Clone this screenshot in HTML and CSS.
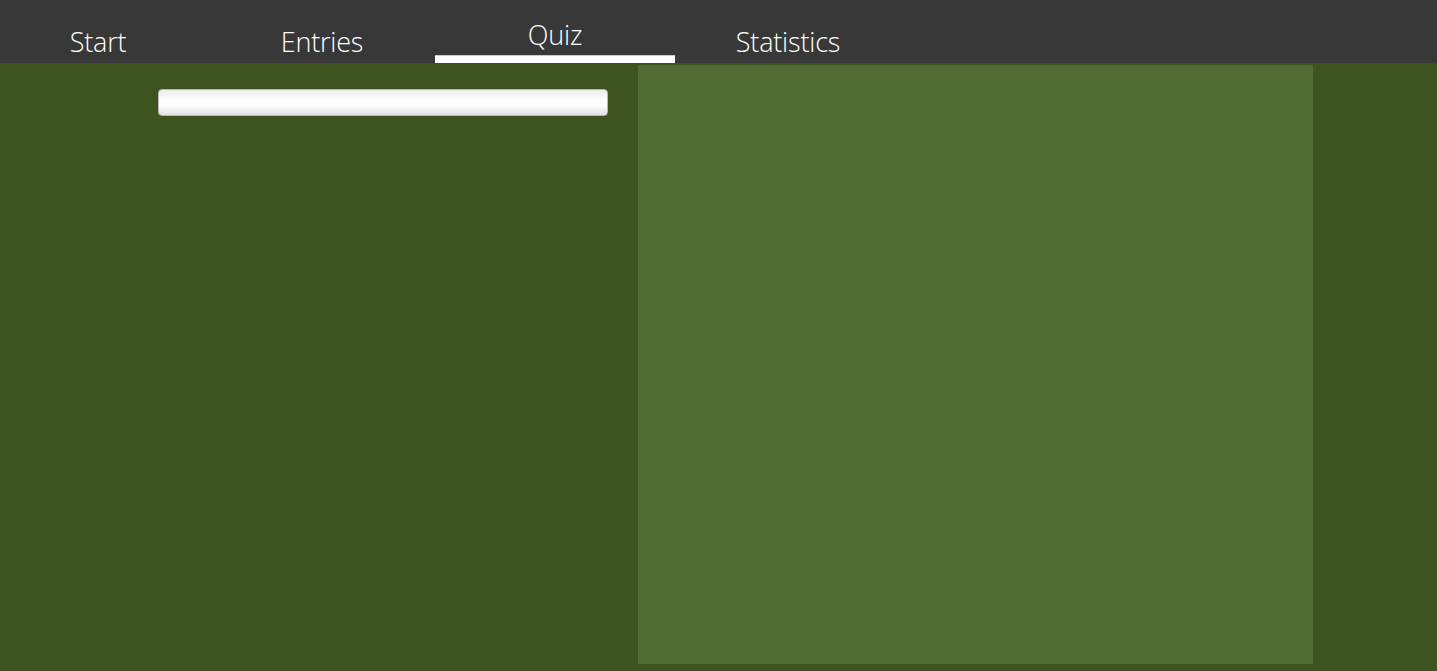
FILE: index.html
```
<!DOCTYPE html>
<html>
<head>
<meta charset="utf-8">
<link rel="stylesheet" href="styles.css">
</head>
<body>
<div class="app">
  <nav class="tabs">
    <div class="tab tab-start"><span>Start</span></div>
    <div class="tab tab-entries"><span>Entries</span></div>
    <div class="tab tab-quiz active"><span>Quiz</span></div>
    <div class="tab tab-stats"><span>Statistics</span></div>
  </nav>
  <main class="content">
    <section class="left">
      <div class="progress"></div>
    </section>
    <section class="card"></section>
  </main>
</div>
</body>
</html>
```
FILE: styles.css
```
html, body {
  margin: 0;
  padding: 0;
  height: 100%;
}
body {
  background: #3d5421;
  font-family: "Open Sans", "Segoe UI", sans-serif;
  overflow: hidden;
}
.app {
  display: flex;
  flex-direction: column;
  height: 671px;
}
.tabs {
  display: flex;
  height: 63px;
  background: #383838;
  flex: none;
}
.tab {
  position: relative;
  color: #ffffff;
  font-weight: 300;
  font-size: 27px;
  letter-spacing: -0.2px;
  text-align: center;
  box-sizing: border-box;
  padding-top: 25px;
  line-height: 34px;
}
.tab-start { width: 196px; }
.tab-entries { width: 239px; padding-left: 13px; }
.tab-quiz { width: 240px; }
.tab-stats { width: 226px; }
.tab.active {
  padding-top: 18px;
}
.tab.active::after {
  content: "";
  position: absolute;
  left: 0;
  right: 0;
  top: 55px;
  height: 8px;
  background: #ffffff;
  border-top: 1px solid #c8c8c8;
  box-sizing: border-box;
}
.content {
  flex: 1;
  display: flex;
  padding-top: 2px;
  padding-bottom: 7px;
}
.left {
  width: 638px;
  box-sizing: border-box;
  padding-left: 158px;
  padding-top: 24px;
}
.progress {
  width: 450px;
  height: 27px;
  box-sizing: border-box;
  border: 1px solid #b8b8b8;
  border-radius: 4px;
  background: linear-gradient(to bottom, #ececec 0%, #fdfdfd 40%, #ffffff 60%, #e2e2e2 100%);
}
.card {
  width: 675px;
  background: #526d33;
}
```
